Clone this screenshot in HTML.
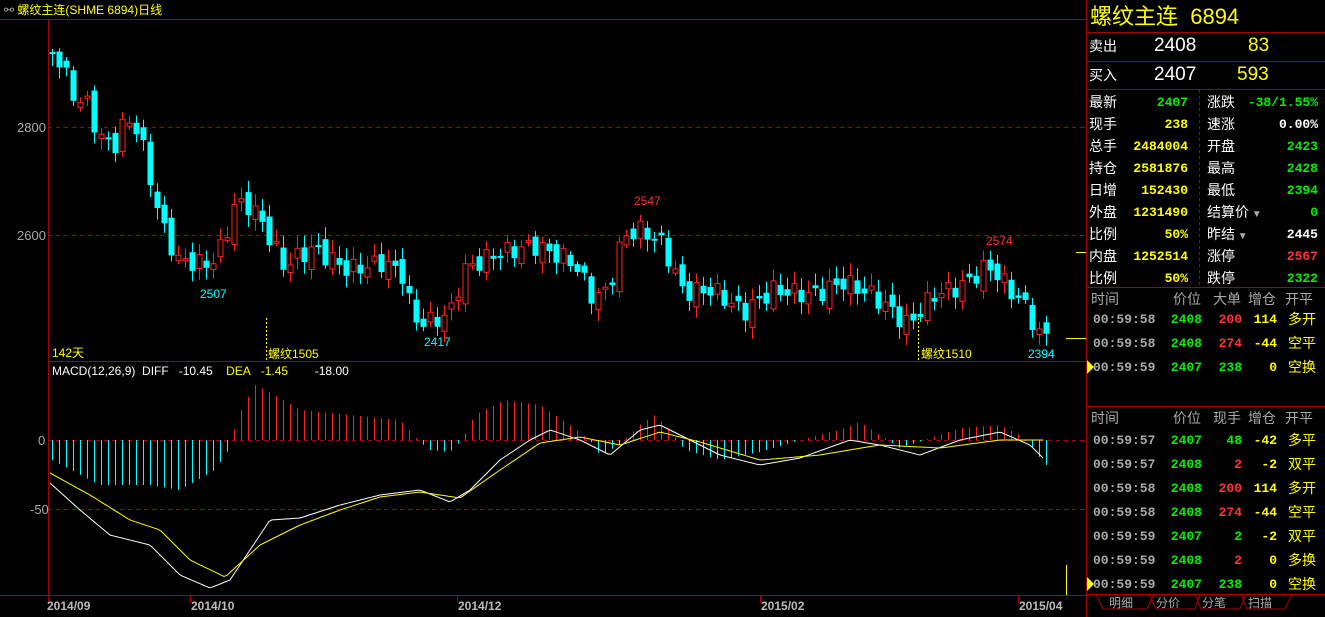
<!DOCTYPE html>
<html><head><meta charset="utf-8"><style>
body{margin:0;background:#000;width:1325px;height:617px;overflow:hidden;position:relative;font-family:"Liberation Sans","Noto Sans CJK SC",sans-serif}
.t{position:absolute;white-space:nowrap;font-size:13px;line-height:14px}
.m{font-family:"Liberation Mono","Noto Sans CJK SC",monospace;font-weight:bold}
.y{color:#ffff00}.g{color:#00ee00}.r{color:#ff3333}.w{color:#fff}.gr{color:#aaa}.c{color:#00ffff}
.rt{text-align:right}
</style></head><body>
<svg id="sv" width="1325" height="617" style="position:absolute;left:0;top:0">
<line x1="0" y1="19.5" x2="1086" y2="19.5" stroke="#a00" />
<line x1="48.5" y1="19" x2="48.5" y2="596" stroke="#a00"/>
<line x1="48" y1="361.5" x2="1086" y2="361.5" stroke="#a00"/>
<line x1="0" y1="595.5" x2="1086" y2="595.5" stroke="#a00"/>
<line x1="1086.5" y1="0" x2="1086.5" y2="617" stroke="#a00"/>
<g stroke="#a00" stroke-dasharray="4,4">
<line x1="48" y1="127.5" x2="1086" y2="127.5"/>
<line x1="48" y1="235.5" x2="1086" y2="235.5"/>
<line x1="48" y1="440.5" x2="1086" y2="440.5"/>
<line x1="48" y1="509.5" x2="1086" y2="509.5"/>
</g>
<g stroke="#ff0" stroke-dasharray="2,2"><line x1="266.5" y1="318" x2="266.5" y2="360"/><line x1="918.5" y1="318" x2="918.5" y2="360"/></g>
<line x1="1076" y1="252.5" x2="1086" y2="252.5" stroke="#ff0"/>
<line x1="1066" y1="338.5" x2="1086" y2="338.5" stroke="#ff0"/>
<line x1="1066.5" y1="565" x2="1066.5" y2="595" stroke="#ff0"/>
<g stroke="#a00"><line x1="48.5" y1="596" x2="48.5" y2="603"/><line x1="190.5" y1="596" x2="190.5" y2="603"/><line x1="457.5" y1="596" x2="457.5" y2="603"/><line x1="760.5" y1="596" x2="760.5" y2="603"/><line x1="1018.5" y1="596" x2="1018.5" y2="603"/></g>
<g stroke="#a00">
<line x1="1086" y1="32.5" x2="1325" y2="32.5"/>
<line x1="1086" y1="61.5" x2="1325" y2="61.5"/>
<line x1="1086" y1="89.5" x2="1325" y2="89.5"/>
<line x1="1086" y1="287.5" x2="1325" y2="287.5"/>
<line x1="1086" y1="406.5" x2="1325" y2="406.5"/>
<line x1="1086" y1="594.5" x2="1325" y2="594.5"/>
<line x1="1199.5" y1="90" x2="1199.5" y2="287" stroke-dasharray="3,3"/>
<path d="M1096 594 L1103 609 L1147 609 L1154 594 M1154 594 L1147 609 M1149 594 L1156 609 L1195 609 L1200 594 M1195 594 L1201 609 L1240 609 L1246 594 M1241 594 L1247 609 L1285 609 L1292 594" fill="none"/>
</g>
<polygon points="1087,360 1094,367 1087,374" fill="#ff0"/>
<polygon points="1087,577 1094,584 1087,591" fill="#ff0"/>
<g id="cd"></g><g id="mc"></g>
</svg>
<div class="t y" style="left:4px;top:3px;font-size:12px"><span class="gr">⚯</span> 螺纹主连(SHME 6894)日线</div>
<div class="t gr" style="left:17px;top:121px">2800</div>
<div class="t gr" style="left:17px;top:229px">2600</div>
<div class="t gr" style="left:38px;top:434px">0</div>
<div class="t gr" style="left:30px;top:503px">-50</div>
<div class="t y" style="left:52px;top:346px;font-size:12px">142天</div>
<div class="t y" style="left:268px;top:347px;font-size:12px">螺纹1505</div>
<div class="t y" style="left:921px;top:347px;font-size:12px">螺纹1510</div>
<div class="t c" style="left:200px;top:287px;font-size:12px">2507</div>
<div class="t c" style="left:424px;top:335px;font-size:12px">2417</div>
<div class="t r" style="left:634px;top:194px;font-size:12px">2547</div>
<div class="t r" style="left:986px;top:234px;font-size:12px">2574</div>
<div class="t c" style="left:1028px;top:347px;font-size:12px">2394</div>
<div class="t w" style="left:52px;top:364px;font-size:12px">MACD(12,26,9)&nbsp; DIFF&nbsp;&nbsp; -10.45&nbsp;&nbsp;&nbsp; <span class="y">DEA&nbsp;&nbsp; -1.45</span>&nbsp;&nbsp;&nbsp;&nbsp;&nbsp;&nbsp;&nbsp; -18.00</div>
<div class="t gr" style="left:47px;top:599px;font-size:12px;font-weight:bold;color:#bbb">2014/09</div>
<div class="t gr" style="left:191px;top:599px;font-size:12px;font-weight:bold;color:#bbb">2014/10</div>
<div class="t gr" style="left:458px;top:599px;font-size:12px;font-weight:bold;color:#bbb">2014/12</div>
<div class="t gr" style="left:761px;top:599px;font-size:12px;font-weight:bold;color:#bbb">2015/02</div>
<div class="t gr" style="left:1019px;top:599px;font-size:12px;font-weight:bold;color:#bbb">2015/04</div>

<div class="t y" style="left:1090px;top:5px;font-size:22px;line-height:24px">螺纹主连&nbsp; 6894</div>
<div class="t w" style="left:1089px;top:38px;font-size:14px;line-height:16px">卖出</div>
<div class="t w" style="left:1154px;top:36px;font-size:19px;line-height:20px">2408</div>
<div class="t y" style="left:1248px;top:36px;font-size:19px;line-height:20px">83</div>
<div class="t w" style="left:1089px;top:67px;font-size:14px;line-height:16px">买入</div>
<div class="t w" style="left:1154px;top:65px;font-size:19px;line-height:20px">2407</div>
<div class="t y" style="left:1237px;top:65px;font-size:19px;line-height:20px">593</div>
<div id="grid"></div>
<div id="tl"></div>
<div class="t gr" style="left:1109px;top:596px;font-size:12px">明细</div>
<div class="t gr" style="left:1156px;top:596px;font-size:12px">分价</div>
<div class="t gr" style="left:1202px;top:596px;font-size:12px">分笔</div>
<div class="t gr" style="left:1248px;top:596px;font-size:12px">扫描</div>
<script>
var NS="http://www.w3.org/2000/svg";
function el(p,n,a){var e=document.createElementNS(NS,n);for(var k in a)e.setAttribute(k,a[k]);p.appendChild(e);return e;}
function interp(pts,x){for(var i=0;i<pts.length-1;i++){if(x<=pts[i+1][0]){var a=pts[i],b=pts[i+1];return a[1]+(b[1]-a[1])*(x-a[0])/(b[0]-a[0]);}}return pts[pts.length-1][1];}
var price=[[52,45],[66,60],[80,95],[95,105],[105,135],[120,148],[133,118],[145,130],[160,190],[168,225],[185,260],[200,262],[215,265],[230,245],[240,205],[255,205],[265,215],[290,265],[320,248],[355,270],[390,262],[410,275],[420,320],[440,322],[458,310],[470,270],[500,255],[540,245],[580,262],[600,298],[615,290],[630,235],[650,230],[670,245],[690,292],[720,290],[750,312],[780,290],[820,295],[850,282],[880,295],[915,325],[940,295],[970,285],[995,265],[1010,282],[1035,310],[1045,335]];
var cd=document.getElementById("cd"),prev=interp(price,52);
for(var i=0;i<143;i++){var x=52+i*7;var c=interp(price,x+7)+Math.sin(i*2.3)*10;var o=prev+Math.cos(i*1.7)*7;prev=c;
var up=c<o;var t=Math.min(o,c),b=Math.max(o,c);if(b-t<2)b=t+2;var hi=t-3-Math.abs(Math.sin(i*3.1))*9,lo=b+3+Math.abs(Math.cos(i*2.7))*9;
var col=up?"#ff2020":"#00ffff";
el(cd,"line",{x1:x+0.5,x2:x+0.5,y1:hi,y2:lo,stroke:col});
if(up)el(cd,"rect",{x:x-2,y:t+0.5,width:5,height:b-t,fill:"#000",stroke:col});else el(cd,"rect",{x:x-2.5,y:t,width:6,height:b-t,fill:col});}
var hist=[[52,-20],[100,-45],[150,-45],[180,-50],[215,-30],[232,-5],[236,20],[255,55],[275,45],[300,30],[350,25],[400,20],[418,0],[430,-10],[450,-12],[462,0],[475,25],[505,40],[540,35],[570,15],[590,0],[600,-15],[620,-5],[640,15],[655,25],[670,10],[685,-10],[720,-20],[760,-12],[800,0],[840,10],[860,18],[880,5],[900,-8],[940,5],[960,12],[1000,15],[1020,5],[1035,-10],[1045,-25]];
var mc=document.getElementById("mc");
for(var i=0;i<143;i++){var x=52+i*7+0.5;var h=interp(hist,x);el(mc,"line",{x1:x,x2:x,y1:440,y2:440-h,stroke:h>0?"#ff2020":"#00ffff"});}
var diff=[[50,483],[80,510],[110,535],[150,545],[180,575],[210,588],[230,580],[250,550],[270,520],[300,518],[340,505],[380,495],[420,490],[450,502],[470,490],[500,460],[530,440],[550,430],[580,440],[610,455],[640,430],[660,425],[690,440],[720,455],[760,465],[800,458],[850,440],[880,445],[920,455],[960,440],[1000,432],[1030,445],[1045,460]];
var dea=[[50,473],[90,495],[130,520],[160,530],[190,560],[225,577],[260,545],[300,525],[340,510],[380,497],[420,492],[460,498],[500,470],[540,443],[580,437],[620,445],[660,432],[700,442],[760,460],[820,455],[880,445],[940,448],[1000,440],[1040,440]];
function pl(p,c){var d="";for(var x=50;x<=1045;x+=3)d+=x+","+interp(p,x).toFixed(1)+" ";el(mc,"polyline",{points:d,fill:"none",stroke:c});}
pl(diff,"#fff");pl(dea,"#ffff00");
var L=[["最新","2407","g","涨跌","-38/1.55%","g"],["现手","238","y","速涨","0.00%","w"],["总手","2484004","y","开盘","2423","g"],["持仓","2581876","y","最高","2428","g"],["日增","152430","y","最低","2394","g"],["外盘","1231490","y","结算价▾","0","g"],["比例","50%","y","昨结▾","2445","w"],["内盘","1252514","y","涨停","2567","r"],["比例","50%","y","跌停","2322","g"]];
var h="";for(var i=0;i<L.length;i++){var y=95+i*22;var r=L[i];
h+='<div class="t w" style="left:1089px;top:'+y+'px;font-size:14px">'+r[0]+'</div><div class="t m rt '+r[2]+'" style="left:1120px;width:68px;top:'+(y+1)+'px">'+r[1]+'</div><div class="t w" style="left:1207px;top:'+y+'px;font-size:14px">'+r[3].replace("▾",'<span class="gr" style="font-size:10px"> ▼</span>')+'</div><div class="t m rt '+r[5]+'" style="left:1240px;width:78px;top:'+(y+1)+'px">'+r[4]+'</div>';}
document.getElementById("grid").innerHTML=h;
function row(y,a){return '<div class="t m gr" style="left:1093px;top:'+y+'px">'+a[0]+'</div><div class="t m g rt" style="left:1160px;width:42px;top:'+y+'px">'+a[1]+'</div><div class="t m rt '+a[3]+'" style="left:1205px;width:37px;top:'+y+'px">'+a[2]+'</div><div class="t m y rt" style="left:1245px;width:32px;top:'+y+'px">'+a[4]+'</div><div class="t y" style="left:1288px;top:'+(y-1)+'px;font-size:14px">'+a[5]+'</div>';}
function hd(y,n){return '<div class="t gr" style="left:1091px;top:'+y+'px;font-size:14px">时间</div><div class="t gr" style="left:1173px;top:'+y+'px;font-size:14px">价位</div><div class="t gr" style="left:1213px;top:'+y+'px;font-size:14px">'+n+'</div><div class="t gr" style="left:1248px;top:'+y+'px;font-size:14px">增仓</div><div class="t gr" style="left:1285px;top:'+y+'px;font-size:14px">开平</div>';}
var t=hd(292,"大单");
var A=[["00:59:58","2408","200","r","114","多开"],["00:59:58","2408","274","r","-44","空平"],["00:59:59","2407","238","g","0","空换"]];
for(var i=0;i<3;i++)t+=row(313+i*24,A[i]);
t+=hd(411,"现手");
var B=[["00:59:57","2407","48","g","-42","多平"],["00:59:57","2408","2","r","-2","双平"],["00:59:58","2408","200","r","114","多开"],["00:59:58","2408","274","r","-44","空平"],["00:59:59","2407","2","g","-2","双平"],["00:59:59","2408","2","r","0","多换"],["00:59:59","2407","238","g","0","空换"]];
for(var i=0;i<7;i++)t+=row(434+i*24,B[i]);
document.getElementById("tl").innerHTML=t;
</script>
</body></html>
